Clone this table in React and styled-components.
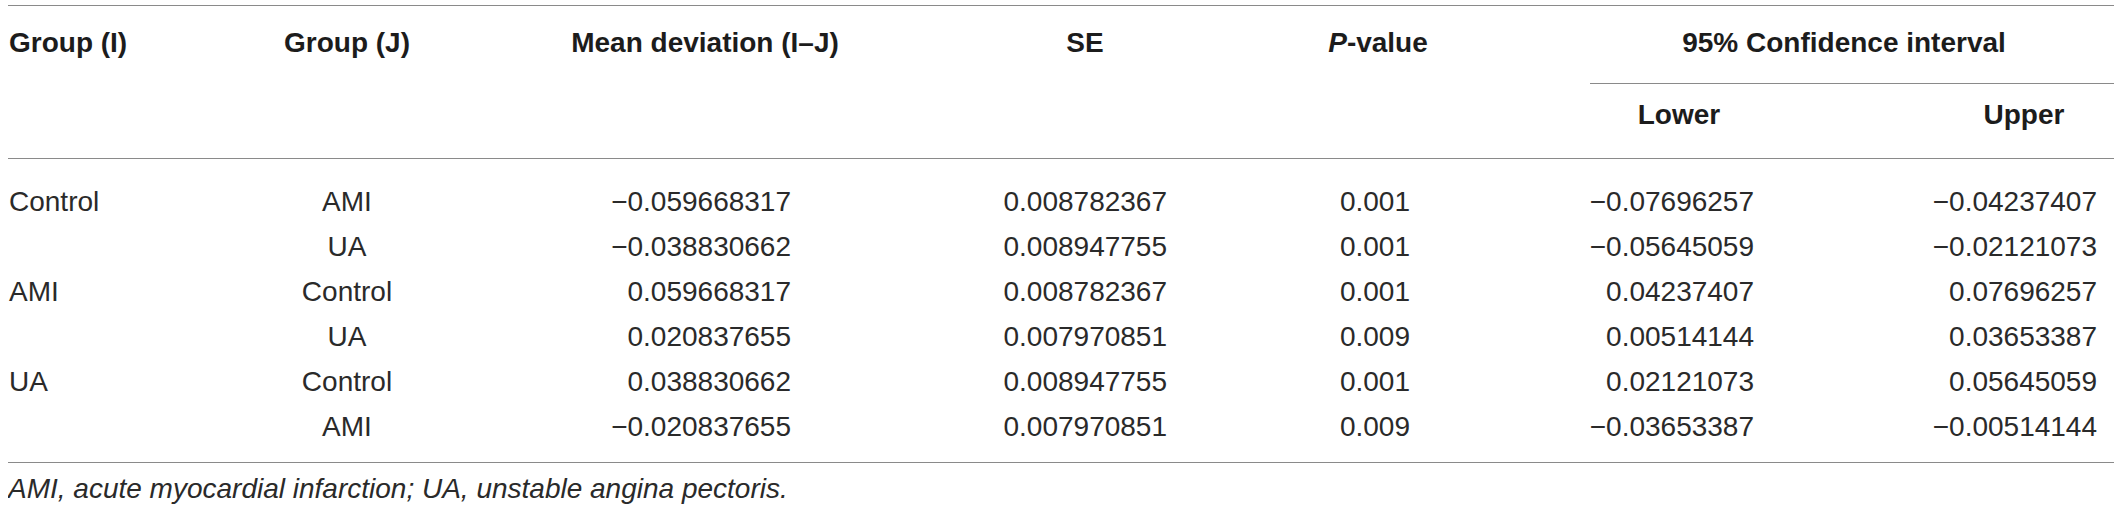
import React from "react";
import styled, { createGlobalStyle } from "styled-components";

const GlobalStyle = createGlobalStyle`
  body {
    margin: 5px 6px 0 8px;
    background: #ffffff;
    font-family: "Liberation Sans", Arial, sans-serif;
  }
`;

const COLUMNS = "192px 294px 422px 338px 248px 354px 258px";

const Table = styled.div`
  width: 2106px;
  border-top: 1px solid #8a8a8a;
`;

const Head = styled.div`
  display: grid;
  grid-template-columns: ${COLUMNS};
  grid-template-rows: 78px 74px;
  border-bottom: 1px solid #8a8a8a;
  color: #1c1c1c;
  font-size: 28px;
  font-weight: 700;
  line-height: 34px;
`;

const HeadCell = styled.div`
  grid-column: ${(p) => p.$col};
  grid-row: ${(p) => p.$row || "1 / span 2"};
  text-align: ${(p) => p.$align || "center"};
  padding-top: ${(p) => (p.$row === 2 ? "14px" : "20px")};
  padding-left: ${(p) => p.$padLeft || 0}px;
  white-space: nowrap;
`;

const GroupHead = styled.div`
  grid-column: 6 / span 2;
  grid-row: 1;
  margin-left: 88px;
  padding: 20px 16px 0 0;
  text-align: center;
  border-bottom: 1px solid #8a8a8a;
  white-space: nowrap;
`;

const Italic = styled.i`
  font-style: italic;
`;

const Body = styled.div`
  display: grid;
  grid-template-columns: ${COLUMNS};
  grid-auto-rows: 45px;
  padding: 20px 0 13px;
  border-bottom: 1px solid #8a8a8a;
  color: #2a2a2a;
  font-size: 28px;
  line-height: 45px;
`;

const Cell = styled.div`
  text-align: ${(p) => p.$align};
  padding-left: ${(p) => p.$padLeft || 0}px;
  padding-right: ${(p) => p.$padRight || 0}px;
  white-space: nowrap;
`;

const Footnote = styled.p`
  margin: 0;
  padding-top: 9px;
  color: #2a2a2a;
  font-size: 28px;
  font-style: italic;
  line-height: 34px;
`;

const bodyColumns = [
  { align: "left", padLeft: 1 },
  { align: "center" },
  { align: "right", padRight: 125 },
  { align: "right", padRight: 87 },
  { align: "right", padRight: 92 },
  { align: "right", padRight: 102 },
  { align: "right", padRight: 17 },
];

const rows = [
  ["Control", "AMI", "−0.059668317", "0.008782367", "0.001", "−0.07696257", "−0.04237407"],
  ["", "UA", "−0.038830662", "0.008947755", "0.001", "−0.05645059", "−0.02121073"],
  ["AMI", "Control", "0.059668317", "0.008782367", "0.001", "0.04237407", "0.07696257"],
  ["", "UA", "0.020837655", "0.007970851", "0.009", "0.00514144", "0.03653387"],
  ["UA", "Control", "0.038830662", "0.008947755", "0.001", "0.02121073", "0.05645059"],
  ["", "AMI", "−0.020837655", "0.007970851", "0.009", "−0.03653387", "−0.00514144"],
];

const App = () => {
  return (
    <>
      <GlobalStyle />
      <Table>
        <Head>
          <HeadCell $col={1} $align="left" $padLeft={1}>
            Group (I)
          </HeadCell>
          <HeadCell $col={2}>Group (J)</HeadCell>
          <HeadCell $col={3}>Mean deviation (I–J)</HeadCell>
          <HeadCell $col={4}>SE</HeadCell>
          <HeadCell $col={5}>
            <Italic>P</Italic>-value
          </HeadCell>
          <GroupHead>95% Confidence interval</GroupHead>
          <HeadCell $col={6} $row={2}>
            Lower
          </HeadCell>
          <HeadCell $col={7} $row={2} $padLeft={78}>
            Upper
          </HeadCell>
        </Head>
        <Body>
          {rows.map((row, i) =>
            row.map((value, j) => (
              <Cell
                key={i + "-" + j}
                $align={bodyColumns[j].align}
                $padLeft={bodyColumns[j].padLeft}
                $padRight={bodyColumns[j].padRight}
              >
                {value}
              </Cell>
            ))
          )}
        </Body>
      </Table>
      <Footnote>
        AMI, acute myocardial infarction; UA, unstable angina pectoris.
      </Footnote>
    </>
  );
};

export default App;
